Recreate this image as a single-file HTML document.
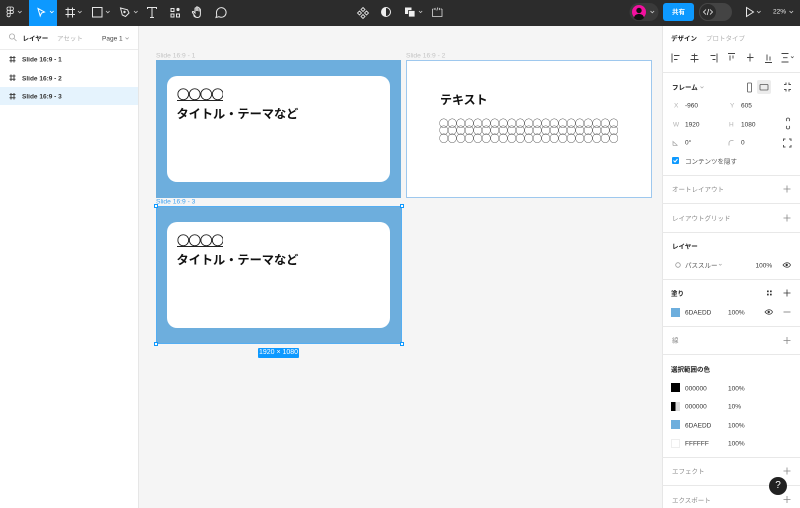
<!DOCTYPE html>
<html lang="ja"><head><meta charset="utf-8">
<style>
*{box-sizing:border-box}
html,body{margin:0;padding:0;background:#f5f5f5}
body{width:800px;height:508px;overflow:hidden;position:relative;background:#f5f5f5;font-family:"Liberation Sans","Noto Sans CJK JP",sans-serif;color:#333}
#w{position:absolute;left:0;top:0;width:800px;height:508px;filter:blur(.25px)}
.a{position:absolute}
.t{position:absolute;font-size:6.500px;line-height:10px;white-space:nowrap;color:#333;transform:translateY(1.500px)}
.g{color:#8c8c8c}
.l{color:#b3b3b3}
.b{font-weight:700;color:#222}
.cl{font-size:6.700px}
.hr{position:absolute;left:662px;width:138px;height:1px;background:#e8e8e8}
svg{position:absolute;overflow:visible}
.k{fill:none;stroke:#e6e6e6;stroke-width:1}
.sw{position:absolute;left:671px;width:9px;height:9px}
.title{position:absolute;font-size:12.200px;font-weight:700;line-height:16px;color:#111;white-space:nowrap;font-family:"Noto Sans CJK JP",sans-serif}
.circ{position:absolute;left:177px;width:46px;height:12.500px;border-bottom:1px solid #222;font-size:12.500px;line-height:12px;letter-spacing:-1px;font-weight:400;color:#111;overflow:hidden;-webkit-text-stroke:.35px #111}
</style></head><body><div id="w">
<!-- top bar -->
<div class="a" style="left:0;top:0;width:800px;height:26px;background:#2c2c2c"></div>
<div class="a" style="left:29px;top:0;width:28px;height:26px;background:#0d99ff"></div>
<svg style="left:0;top:0" width="800" height="26">
 <path d="M10.200 7H8.600a1.600 1.600 0 0 0 0 3.300h1.600zM10.200 7h1.600a1.600 1.600 0 0 1 0 3.300h-1.600zM10.200 10.300H8.600a1.600 1.600 0 0 0 0 3.300h1.600zM8.600 13.600h1.600v1.650a1.600 1.600 0 1 1-1.600-1.650z" fill="none" stroke="#e6e6e6" stroke-width=".8"/>
 <circle cx="11.800" cy="11.950" r="1.600" fill="none" stroke="#e6e6e6" stroke-width=".8"/>
 <path d="M18 11l1.800 1.800L21.600 11" fill="none" stroke="#ccc" stroke-width=".8"/>
 <path d="M38 8.500l6.500 3.500-3 1-1.300 3z" fill="none" stroke="#fff" stroke-width="1"/>
 <path d="M50 11l1.800 1.800L53.600 11" fill="none" stroke="#fff" stroke-width=".8"/>
 <path class="k" d="M68 7.500v10M72.500 7.500v10M65.500 9.500h9.500M65.500 14.500h9.500"/>
 <path d="M78 11l1.800 1.800L81.600 11" fill="none" stroke="#ccc" stroke-width=".8"/>
 <rect class="k" x="92.500" y="7.500" width="9.500" height="9.500"/>
 <path d="M106 11l1.800 1.800L109.600 11" fill="none" stroke="#ccc" stroke-width=".8"/>
 <path class="k" d="M120.500 8l7 1.800 1.500 3.200-3.500 3.500-3.200-1.500z"/><circle cx="124.500" cy="12" r="1.200" fill="#e6e6e6"/>
 <path d="M134 11l1.800 1.800L137.600 11" fill="none" stroke="#ccc" stroke-width=".8"/>
 <path class="k" d="M147.500 9V7.500h9V9M152 7.500v10M150 17.500h4"/>
 <path class="k" d="M171 8.500h3v3h-3zM171 14h3v3h-3zM176.500 14h3v3h-3z"/><circle cx="178" cy="9.500" r="1.600" fill="#e6e6e6"/>
 <path class="k" d="M195 16c-1-1.500-2-2.500-2.500-3.500s.5-1.500 1.500-.5l1 1V8.500c0-1 1.300-1 1.300 0V11V7.500c0-1 1.400-1 1.400 0V11V8c0-1 1.400-1 1.400 0v3.500V9.500c0-1 1.300-1 1.300 0V14c0 2-1 3.500-3 3.500s-2.500-.5-3.400-1.500z"/>
 <path class="k" d="M216.500 12.500a4.800 4.800 0 1 1 2.500 4.200l-3 .8.800-2.500a4.800 4.800 0 0 1-.3-2.500z"/>
 <!-- centre -->
 <path d="M363 7.500l2 2-2 2-2-2zM359.500 11l2 2-2 2-2-2zM366.500 11l2 2-2 2-2-2zM363 14.500l2 2-2 2-2-2z" fill="none" stroke="#ddd" stroke-width=".9"/>
 <circle cx="386" cy="12" r="4.500" fill="none" stroke="#eee" stroke-width="1"/><path d="M386 7.500a4.500 4.500 0 0 0 0 9z" fill="#eee"/>
 <rect x="405" y="7.500" width="6.500" height="6.500" fill="#eee"/><rect x="408.500" y="10.500" width="6.500" height="6.500" fill="#eee" stroke="#2c2c2c" stroke-width=".8"/>
 <path d="M419 11l1.600 1.600L422.200 11" fill="none" stroke="#ccc" stroke-width=".8"/>
 <path d="M432.500 9v7.500h9.500V9M432.500 9h1M441 9h1M435.500 8l-1 1 1 1M439 8l1 1-1 1M437.800 7.500l-1 3" fill="none" stroke="#ddd" stroke-width=".8"/>
 <!-- user -->
 <rect x="629.500" y="3" width="29" height="18" rx="9" fill="#3a3a3a"/>
 <circle cx="639" cy="12" r="7" fill="#f2109f"/>
 <circle cx="639" cy="10.500" r="2.700" fill="#111"/><path d="M634 18c.5-3 2.500-4 5-4s4.500 1 5 4a7 7 0 0 1-10 0z" fill="#111"/>
 <path d="M650.500 11l1.800 1.800 1.800-1.800" fill="none" stroke="#ccc" stroke-width=".8"/>
 <rect x="699" y="3" width="33" height="18" rx="9" fill="#444"/>
 <circle cx="708" cy="12" r="8.500" fill="#2c2c2c" stroke="#444"/>
 <path d="M706 9.500L703.500 12l2.500 2.500M710 9.500l2.500 2.500-2.500 2.500M708.800 9l-1.600 6" fill="none" stroke="#eee" stroke-width=".8"/>
 <path d="M746.500 7.500v9l7-4.500z" fill="none" stroke="#e6e6e6" stroke-width="1"/>
 <path d="M757 11l1.800 1.800 1.800-1.800" fill="none" stroke="#ccc" stroke-width=".8"/>
 <path d="M789.500 11l1.800 1.800 1.800-1.800" fill="none" stroke="#ccc" stroke-width=".8"/>
</svg>
<div class="a" style="left:663px;top:3px;width:31px;height:18px;background:#0d99ff;border-radius:3px;color:#fff;font-size:6.500px;font-weight:700;line-height:19px;text-align:center">共有</div>
<div class="t" style="left:773px;top:5.500px;color:#eee">22%</div>

<!-- left panel -->
<div class="a" style="left:0;top:26px;width:138.500px;height:482px;background:#fff;border-right:1px solid #e6e6e6"></div>
<div class="a" style="left:0;top:49px;width:138px;height:1px;background:#ececec"></div>
<div class="a" style="left:0;top:87px;width:138px;height:18px;background:#e5f3fd"></div>
<svg style="left:0;top:26px" width="138" height="90">
 <circle cx="12" cy="10.500" r="2.600" fill="none" stroke="#aaa" stroke-width=".8"/><path d="M14 12.500l2.500 2.500" stroke="#aaa" stroke-width=".8"/>
 <path d="M125.500 11.500l1.600 1.600 1.600-1.600" fill="none" stroke="#999" stroke-width=".7"/>
 <g fill="none" stroke="#444" stroke-width="1"><path d="M11 30v6.500M14 30v6.500M9.500 31.500h6M9.500 34.800h6"/><path d="M11 48.500v6.500M14 48.500v6.500M9.500 50h6M9.500 53.300h6"/><path d="M11 67v6.500M14 67v6.500M9.500 68.500h6M9.500 71.800h6"/></g>
</svg>
<div class="t b" style="left:22.500px;top:32.500px">レイヤー</div>
<div class="t l" style="left:57px;top:32.500px">アセット</div>
<div class="t" style="left:102px;top:32.500px;color:#444">Page 1</div>
<div class="t b" style="left:22px;top:54px;color:#333">Slide 16:9 - 1</div>
<div class="t b" style="left:22px;top:72.500px;color:#333">Slide 16:9 - 2</div>
<div class="t b" style="left:22px;top:91px;color:#333">Slide 16:9 - 3</div>

<!-- canvas: frame 1 -->
<div class="t cl" style="left:156px;top:49.500px;color:#c4c4c4">Slide 16:9 - 1</div>
<div class="a" style="left:156px;top:60px;width:245px;height:137.500px;background:#6daedd"></div>
<div class="a" style="left:167.300px;top:76px;width:222.700px;height:106px;background:#fff;border-radius:10px"></div>
<div class="title circ" style="top:88px">○○○○</div>
<div class="title" style="left:176.500px;top:104.500px">タイトル・テーマなど</div>

<!-- frame 2 -->
<div class="t cl" style="left:406px;top:49.500px;color:#c4c4c4">Slide 16:9 - 2</div>
<div class="a" style="left:406px;top:60px;width:245.500px;height:137.500px;background:#fff;border:1px solid #9ec8ee"></div>
<div class="title" style="left:440px;top:92px;font-size:12px">テキスト</div>
<div class="a" style="left:439px;top:119.500px;width:182px;font-family:'Noto Sans CJK JP',sans-serif;font-size:9.500px;line-height:7.500px;letter-spacing:-1px;color:#333;white-space:nowrap">○○○○○○○○○○○○○○○○○○○○○<br>○○○○○○○○○○○○○○○○○○○○○<br>○○○○○○○○○○○○○○○○○○○○○</div>

<!-- frame 3 -->
<div class="t cl" style="left:156px;top:195.500px;color:#3fa2f0">Slide 16:9 - 3</div>
<div class="a" style="left:156px;top:206px;width:245.500px;height:138px;background:#6daedd;border:1px solid #55aef2"></div>
<div class="a" style="left:167.300px;top:222px;width:222.700px;height:106px;background:#fff;border-radius:10px"></div>
<div class="title circ" style="top:234px">○○○○</div>
<div class="title" style="left:176.500px;top:251px">タイトル・テーマなど</div>
<div class="a" style="left:154px;top:204px;width:4px;height:4px;background:#fff;border:1px solid #0d99ff"></div>
<div class="a" style="left:399.500px;top:204px;width:4px;height:4px;background:#fff;border:1px solid #0d99ff"></div>
<div class="a" style="left:154px;top:342px;width:4px;height:4px;background:#fff;border:1px solid #0d99ff"></div>
<div class="a" style="left:399.500px;top:342px;width:4px;height:4px;background:#fff;border:1px solid #0d99ff"></div>
<div class="a" style="left:258px;top:348px;width:41px;height:10px;background:#0d99ff;border-radius:1px;color:#fff;font-size:7px;line-height:10px;text-align:center">1920 × 1080</div>

<!-- right panel -->
<div class="a" style="left:662px;top:26px;width:138px;height:482px;background:#fff;border-left:1px solid #e6e6e6"></div>
<div class="t b" style="left:671px;top:32.500px">デザイン</div>
<div class="t l" style="left:706px;top:32.500px">プロトタイプ</div>
<svg style="left:662px;top:45px" width="138" height="30" fill="none" stroke="#444" stroke-width=".9">
 <path d="M10 8.500v9M12 10.500h5.500M12 14.500h3.500"/>
 <path d="M32.500 8.500v9M29.500 10.500h6M28.500 14.500h8"/>
 <path d="M55 8.500v9M48.500 10.500h5M50.500 14.500h3"/>
 <path d="M66 8.500h7M68 10.500v5M71 10.500v3"/>
 <path d="M88 8.500v8M85 12.500h6.500"/>
 <path d="M103 17.500h7M105 9.500v6M108 11.500v4"/>
 <path d="M119.500 8.500h7M119.500 17h7M121 12.700h4.500"/>
 <path d="M129 11.500l1.300 1.300 1.300-1.300" stroke-width=".7"/>
</svg>
<div class="hr" style="top:72px"></div>
<div class="t b" style="left:672px;top:82px">フレーム</div>
<svg style="left:662px;top:75px" width="138" height="100" fill="none" stroke="#555" stroke-width=".8">
 <path d="M38.500 11.500l1.500 1.500 1.500-1.500" stroke="#aaa" stroke-width=".7"/>
 <rect x="95" y="5" width="14" height="14" rx="2" fill="#ececec" stroke="none"/>
 <rect x="85.500" y="8" width="4" height="9" rx=".6"/>
 <rect x="98" y="9.500" width="8" height="5.500" rx=".6"/>
 <path d="M122 9.500h2v-2M127 7.500v2h2M122 14.500h2v2M127 16.500v-2h2" stroke-width="1"/>
 <path d="M125 46c-1-.5-1-3 1-3s2 2.500 1 3M125 51c-1 .5-1 3 1 3s2-2.500 1-3" stroke="#444"/>
 <path d="M121.500 66v-2h2M127 64h2v2M121.500 70v2h2M129 70v2h-2" stroke-width="1"/>
 <path d="M11 70.500h4.500M11 70.500v-4l4.500 4" stroke="#aaa"/>
 <path d="M67 70.500v-2.500a2.500 2.500 0 0 1 2.500-2.500h2" stroke="#aaa"/>
</svg>
<div class="t l" style="left:674px;top:100px">X</div><div class="t" style="left:685px;top:100px">-960</div>
<div class="t l" style="left:730px;top:100px">Y</div><div class="t" style="left:741px;top:100px">605</div>
<div class="t l" style="left:673px;top:118.500px">W</div><div class="t" style="left:685px;top:118.500px">1920</div>
<div class="t l" style="left:729px;top:118.500px">H</div><div class="t" style="left:741px;top:118.500px">1080</div>
<div class="t" style="left:685px;top:137px">0°</div><div class="t" style="left:741px;top:137px">0</div>
<div class="a" style="left:672px;top:157px;width:7px;height:7px;background:#0d99ff;border-radius:1px"></div>
<svg style="left:672px;top:157px" width="7" height="7"><path d="M1.500 3.500l1.500 1.500 2.500-3" fill="none" stroke="#fff" stroke-width="1"/></svg>
<div class="t" style="left:685px;top:155.500px;color:#555">コンテンツを隠す</div>
<div class="hr" style="top:175px"></div>
<div class="t g" style="left:672px;top:184px">オートレイアウト</div>
<div class="hr" style="top:203px"></div>
<div class="t g" style="left:672px;top:212.500px">レイアウトグリッド</div>
<div class="hr" style="top:232px"></div>
<div class="t b" style="left:672px;top:241px">レイヤー</div>
<div class="t" style="left:685px;top:260px;color:#555">パススルー</div>
<div class="t" style="left:755.500px;top:260px">100%</div>
<div class="hr" style="top:279px"></div>
<div class="t b" style="left:671px;top:288px">塗り</div>
<div class="sw" style="top:307.500px;background:#6daedd"></div>
<div class="t" style="left:685px;top:307px">6DAEDD</div>
<div class="t" style="left:728px;top:307px">100%</div>
<div class="hr" style="top:326px"></div>
<div class="t g" style="left:672px;top:335px">線</div>
<div class="hr" style="top:354px"></div>
<div class="t b" style="left:671px;top:364px">選択範囲の色</div>
<div class="sw" style="top:383px;background:#000"></div>
<div class="t" style="left:685px;top:382.500px">000000</div><div class="t" style="left:728px;top:382.500px">100%</div>
<div class="sw" style="top:401.500px;background:linear-gradient(90deg,#000 50%,#ddd 50%)"></div>
<div class="t" style="left:685px;top:401px">000000</div><div class="t" style="left:728px;top:401px">10%</div>
<div class="sw" style="top:420px;background:#6daedd"></div>
<div class="t" style="left:685px;top:419.500px">6DAEDD</div><div class="t" style="left:728px;top:419.500px">100%</div>
<div class="sw" style="top:438.500px;background:#fff;border:1px solid #eee"></div>
<div class="t" style="left:685px;top:438px">FFFFFF</div><div class="t" style="left:728px;top:438px">100%</div>
<div class="hr" style="top:457px"></div>
<div class="t g" style="left:672px;top:466px">エフェクト</div>
<div class="hr" style="top:485px"></div>
<div class="t g" style="left:672px;top:494.500px">エクスポート</div>

<svg style="left:662px;top:170px" width="138" height="338" fill="none" stroke="#888" stroke-width=".8">
 <path d="M121.500 19h7M125 15.500v7M121.500 48h7M125 44.500v7M121.500 170.500h7M125 167v7M121.500 301h7M125 297.500v7M121.500 329.500h7M125 326v7"/>
 <path d="M121.500 123h7M125 119.500v7" stroke="#333"/>
 <path d="M121.500 142h7" stroke="#777"/>
 <circle cx="16" cy="95" r="2.300" stroke="#999"/>
 <path d="M57 94l1.300 1.300 1.300-1.300" stroke="#aaa" stroke-width=".7"/>
 <path d="M121 95c2.500-3 6-3 7.500 0-1.500 3-5 3-7.500 0z" stroke="#333"/><circle cx="124.700" cy="95" r="1.200" fill="#333" stroke="none"/>
 <path d="M103 142c2.500-3 6-3 7.500 0-1.500 3-5 3-7.500 0z" stroke="#333"/><circle cx="106.700" cy="142" r="1.200" fill="#333" stroke="none"/>
 <g fill="#333" stroke="none"><rect x="105" y="120.500" width="1.700" height="1.700"/><rect x="108" y="120.500" width="1.700" height="1.700"/><rect x="105" y="123.700" width="1.700" height="1.700"/><rect x="108" y="123.700" width="1.700" height="1.700"/></g>
</svg>
<div class="a" style="left:769px;top:477px;width:18px;height:18px;border-radius:50%;background:#222;color:#fff;font-size:10px;line-height:18px;text-align:center">?</div>
</div></body></html>
